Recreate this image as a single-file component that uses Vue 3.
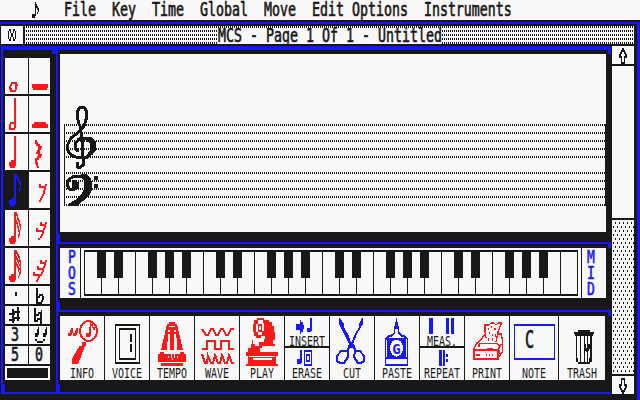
<script setup>
const menus = ['File', 'Key', 'Time', 'Global', 'Move', 'Edit Options', 'Instruments']

// Turns rows of "#" into a path made of 1x2 blocks.
function bits(x, y, rows) {
  let d = ''
  rows.forEach((row, r) => {
    for (const m of row.matchAll(/#+/g)) {
      d += `M${x + m.index} ${y + r * 2}h${m[0].length}v2h-${m[0].length}z`
    }
  })
  return d
}

const noteHead = ['..#####', '#######', '#######', '.#####.']

const palette = [
  { box: '5 58 23 36', fill: bits(9, 82, ['..######', '.##...###', '##....##', '###...##', '.######']) },
  { box: '29 58 21 36', fill: 'M32 84h16v4h-1v2h-14v-2h-1z' },
  { box: '5 96 23 36', fill: 'M14 98h2v24h-2z' + bits(9, 122, ['.######', '##...##', '##...##', '######.']) },
  { box: '29 96 21 36', fill: 'M34 122h12v2h2v4h-16v-4h2z' },
  { box: '5 134 23 36', fill: 'M14 136h2v26h-2z' + bits(9, 160, noteHead) },
  { box: '29 134 21 36', fill: bits(34, 140, ['.##', '.###', '..####', '....####', '....###', '...###', '..####', '....####', '...####', '.####', '.##', '.###', '..##', '...##']) },
  { box: '5 172 23 36', on: true, fill: 'M14 174h2v26h-2z' + bits(9, 198, noteHead) + bits(16, 174, ['#', '##', '.##', '..##', '...##', '....#', '....#', '...##', '...#']) },
  { box: '29 172 21 36', fill: bits(37, 184, ['..##....##', '..#######.', '.......##', '......##', '......##', '.....##', '....##', '...##', '..##']) },
  { box: '5 210 23 36', fill: 'M14 212h2v26h-2z' + bits(9, 236, noteHead) + bits(16, 212, ['#', '##', '.#', '.##', '#.##', '##.#', '.#.##', '.##.#', '..#.#', '..##', '...#', '..##', '..#']) },
  { box: '29 210 21 36', fill: bits(36, 222, ['....##...##', '....######.', '........##', '##.....##', '########', '......##', '.....##', '....##', '..##']) },
  { box: '5 248 23 36', fill: 'M14 250h2v26h-2z' + bits(9, 274, noteHead) + bits(16, 250, ['#', '##', '.##', '#.##', '##.#', '.####', '#.#.#', '##.##', '.##.#', '..###', '..#.#', '...##', '...#', '..#']) },
  { box: '29 248 21 36', fill: bits(33, 260, ['.......##...##', '.......######', '...........##', '....##....##', '....#######', '.........##', '##......##', '#########', '.....##', '....##', '...##']) },
  { box: '5 286 23 18', dark: true, fill: 'M15 292h2v4h-2z' },
  { box: '29 286 21 18', dark: true, fill: bits(36, 288, ['##', '##', '##', '##.####', '####..##', '##....##', '##...##', '######']) },
  { box: '5 306 23 18', dark: true, fill: bits(9, 307, ['........##', '...##...##', '...########', '######..##', '...##...##', '...########', '######..##', '...##']) },
  { box: '29 306 21 18', dark: true, fill: bits(34, 308, ['##', '##.....#', '##..####', '#####.##', '##....##', '##.#####', '####..##', '......##']) },
  { box: '5 326 23 18', text: '3' },
  { box: '29 326 21 18', dark: true, fill: bits(33, 327, ['.....#.......#', '....##......##', '....##......##', '..####....####', '..###.....###', '', '..##......##', '....######']) },
  { box: '5 346 23 18', text: '5' },
  { box: '29 346 21 18', text: '0' },
]

const staff = [124, 132, 140, 148, 156, 172, 180, 188, 196, 204]

// C to C over four octaves: every key but E, B and the last has a sharp to its right.
const keys = Array.from({ length: 29 }, (_, i) => ({
  sharp: i < 28 && ![2, 6].includes(i % 7),
}))

const upArrow = bits(0, 0, ['...##', '..####', '.##..##', '##....##', '###..###', '..#..#', '..#..#', '..####'])
const downArrow = bits(0, 0, ['..####', '..#..#', '..#..#', '###..###', '##....##', '.##..##', '..####', '...##'])
const closeBox = bits(0, 0, ['.##..##.', '#.#..#.#', '#..##..#', '#..##..#', '#.#..#.#', '.##..##.'])
const quaver = bits(0, 0, ['...#', '...##', '...###', '...#.##', '...#..#', '...#.#', '####', '###'])
</script>

<template>
  <div class="screen">
    <nav class="menu">
      <svg class="logo" viewBox="0 0 8 16"><path :d="quaver" /></svg>
      <span v-for="m in menus" :key="m" class="t8">{{ m }}</span>
    </nav>

    <header class="bar">
      <div class="close"><svg viewBox="0 0 8 12"><path :d="closeBox" /></svg></div>
      <div class="ticks"><h1 class="title"><span class="t8">MCS - Page 1 Of 1 - Untitled</span></h1></div>
    </header>

    <div class="body">
      <aside class="palette">
        <div class="cells">
          <div v-for="(c, i) in palette" :key="i" class="cell" :class="{ on: c.on, dark: c.dark }">
            <span v-if="c.text" class="t8">{{ c.text }}</span>
            <svg v-else :viewBox="c.box"><path :d="c.fill" /></svg>
          </div>
          <div class="slot"></div>
        </div>
      </aside>

      <main class="work">
        <section class="panel score">
          <svg class="sheet" viewBox="60 54 546 178">
            <path class="ink" d="M64 124h1v82h-1zM605 124h1v82h-1z" />
            <path v-for="y in staff" :key="y" class="dots" :d="`M66 ${y + 1}H605`" />
            <path class="clef" d="M82 130L79 124L77.500 118V111L80 107.500H84L86.500 111V118L84 126L79 132L71 138L67.500 145V150L71 155L76 157H87L92 153L94 148V145L90 140L85 138L79 139L75.500 143V148L78 152" />
            <path class="clef" d="M80 126L82 138L83 156V165L80 167.500H78L77.500 162" />
            <path class="ink" d="M86 137h5l5 5v8l-5 5h-4l3-5v-7l-5-3z" />
            <path class="clef" d="M83 176H74L69.500 179L67.500 182V186L70 189.500H74L77 187V183L73 182" />
            <path class="ink" d="M72 180h4l2 3v5l-3 1h-3zM81 174h5l4 3 2 5v8l-3 6-6 5-6 5h-9v-2l7-4 6-5 3-6v-8l-3-5zM94 176h4v4h-4zM94 184h4v4h-4z" />
          </svg>
        </section>

        <section class="panel piano">
          <div class="surface">
            <div class="side left"><span class="t8">P</span><span class="t8">O</span><span class="t8">S</span></div>
            <div class="keys">
              <div v-for="(k, i) in keys" :key="i" class="key"><i v-if="k.sharp"></i></div>
            </div>
            <div class="side right"><span class="t8">M</span><span class="t8">I</span><span class="t8">D</span></div>
          </div>
        </section>

        <section class="panel tools">
          <div class="toolrow">
            <div class="tool red">
              <svg viewBox="60 316 44 52">
                <ellipse cx="88.500" cy="331" rx="8.500" ry="10" class="s2" />
                <path d="M82 342h4v4h-1l-7 18h-6v-5l6-11h1v-2h3zM90 322h1v2h2v3h2v3h-2v-2h-1v-2h-1v9l-2 2h-3v-4h3zM71 328h2v4l-2 4h-3v-3h2zM76 328h2v4l-2 4h-3v-3h2z" />
              </svg>
              <span class="t6">INFO</span>
            </div>
            <div class="tool">
              <svg viewBox="105 316 44 52">
                <path fill-rule="evenodd" d="M115 324h25v40h-25zM116 326v36h23v-36zM119 328h17v32h-17zM120 330v28h15v-28zM130 334h2v8h-2zM130 344h2v8h-2z" />
              </svg>
              <span class="t6">VOICE</span>
            </div>
            <div class="tool red">
              <svg viewBox="150 316 44 52">
                <path d="M169 322h6v2h2l6 26h-22l6-26h2zM158 354h2v-2h4v2h16v-2h4v2h2v8h-3v4h-22v-4h-3z" />
                <path class="w" d="M169 326h6v1h-6zM168 330h2v2h-2zM174 330h2v2h-2zM168 334h2v16h-3v-8h1zM174 334h2l1 8v8h-3zM163 350h2v2h-2zM170 350h1v4h-1zM173 350h1v4h-1zM179 350h2v2h-2zM171 354h1v4h-1zM174 354h1v4h-1zM168 356h1v2h-1zM177 356h1v2h-1zM172 358h1v2h-1zM161 362h22v1h-22z" />
              </svg>
              <span class="t6">TEMPO</span>
            </div>
            <div class="tool red">
              <svg viewBox="195 316 44 52">
                <path class="s15" d="M202 329L206 335H208L211 329H213L216 335H218L221 329H223L226 335H228L231 329H234M202 349H207V341H215V349H221V341H229V349H234M202 354L205 363L207 363L208 356L211 363H213L215 355L218 363H220L222 355L225 363H227L229 355L232 363H234" />
              </svg>
              <span class="t6">WAVE</span>
            </div>
            <div class="tool red">
              <svg viewBox="240 316 44 52">
                <path d="M257 318h7v2h5v2h3v4h2v6h1v8h-2v4h2v2h-16v-4h5v-3h1v-3h-4v2h-5v-2h-2v-4h-1v-8h1v-4h3zM252 340h1v4h2v2h7v2h-2v4h15v2h-29v-2h2v-4h3v-4h1zM246 352h32v4h-2v8h2v2h-32v-2h2v-8h-2z" />
                <path class="w" d="M258 320h5v3h1v8h-2v4h-4v-3h-2v-8h2zM249 356h26v1h-26zM253 358h19v2h-19z" />
                <path d="M258 324h4v8h-4z" /><path class="w" d="M259 326h2v4h-2z" />
              </svg>
              <span class="t6">PLAY</span>
            </div>
            <div class="tool split blue">
              <div class="half">
                <svg viewBox="285 316 44 20"><path d="M296 324h4v-4h1v2h2v3h1v4h-1v3h-2v2h-1v-4h-4zM310 318h2v12l-2 2h-3v-4h3z" /></svg>
                <span class="t6">INSERT</span>
              </div>
              <div class="half">
                <svg viewBox="285 348 44 20"><path fill-rule="evenodd" d="M300 350h2v12l-2 2h-3v-5h3zM304 350h8v16h-8zM305 352v12h6v-12zM306 354h4v8h-4zM307 356v4h2v-4z" /></svg>
                <span class="t6">ERASE</span>
              </div>
            </div>
            <div class="tool blue">
              <svg viewBox="330 316 44 52">
                <path d="M339 318h1l4 6v3l5 9 2 6h1l2-6 5-9v-3l3-6h1v6l-6 10-4 10v4h-4v-4l-5-10-5-10z" />
                <path class="s15" d="M350 344L348 350M353 344L355 350M348 351H341L337 356V361L340 363H344L348 357ZM355 351H360L364 356V361L361 363H358L354 357Z" />
              </svg>
              <span class="t6">CUT</span>
            </div>
            <div class="tool blue">
              <svg viewBox="375 316 44 52">
                <path fill-rule="evenodd" d="M396 318h1v4h1v4h1v2h-5v-2h1v-4h1zM394 328h5v4l2 2 5 2 2 3v27h-23v-27l2-3 5-2 2-2zM395 329v4l-2 3-5 2-2 2v24h21v-24l-2-2-5-2-2-3v-4z" />
                <path d="M387 338h19v20h-19zM385 357h23v2h-23z" />
                <ellipse class="w" cx="396.500" cy="348" rx="6.500" ry="8.500" />
                <text class="g" x="396.500" y="353.500">G</text>
              </svg>
              <span class="t6">PASTE</span>
            </div>
            <div class="tool split blue">
              <div class="half">
                <svg viewBox="420 316 44 20"><path d="M429 318h4v16h-4zM446 318h3v16h-3zM451 318h3v16h-3z" /></svg>
                <span class="t6">MEAS.</span>
              </div>
              <div class="half">
                <svg viewBox="420 348 44 20"><path d="M439 350h3v16h-3zM443 350h2v16h-2zM446 354h2v3h-2zM446 359h2v3h-2z" /></svg>
                <span class="t6">REPEAT</span>
              </div>
            </div>
            <div class="tool red">
              <svg viewBox="465 316 44 52">
                <path class="s1" d="M486 338L485 332V325H489L491 323H494L496 325L498 323H501.500L498 332L496 342M480 341L485 334M498 334H501L502.500 340V352L498 358M473.500 349L477 343L480 341M479 343.500H497L500 346M474 350H498M498 350L501 344" />
                <path class="s15" d="M474 349V359H498V350M474 350H498" />
                <path d="M476 354h4v2h-4zM486 354h1v2h-1zM489 354h1v2h-1zM492 354h1v2h-1zM487 348h6v2h-6zM488 328h1v2h-1zM491 326h1v2h-1zM494 328h2v2h-2zM489 332h1v2h-1zM492 334h1v2h-1zM495 334h1v3h-1zM488 338h1v3h-1zM492 338h1v3h-1zM478 344h2v3h-2zM499 350h1v4h-1z" />
              </svg>
              <span class="t6">PRINT</span>
            </div>
            <div class="tool note"><div class="frame"><span class="t8 big">C</span></div><span class="t6">NOTE</span></div>
            <div class="tool last">
              <svg viewBox="559 316 46 52">
                <path d="M578 330h12v2h4v2h-1v2h-1v26h-2v2h-12v-2h-2v-26h-1v-2h-1v-2h4z" />
                <path class="w" d="M577 336h3v24h-1v-2h-2zM581 336h3v26h-3zM585 336h2v26h-2zM588 336h2v22h-1v4h-1zM578 358h2v4h-2z" />
                <path d="M584 344h2v4h2v-4h2v4l-2 4h-2l-2-4z" />
              </svg>
              <span class="t6">TRASH</span>
            </div>
          </div>
        </section>
      </main>

      <aside class="scroll">
        <div class="arrow"><svg viewBox="0 0 8 16"><path :d="upArrow" /></svg></div>
        <div class="thumb"></div>
        <div class="track"></div>
        <div class="arrow"><svg viewBox="0 0 8 16"><path :d="downArrow" /></svg></div>
      </aside>
    </div>
  </div>
</template>

<style>
body { background: #181818; }
</style>

<style scoped>
* { box-sizing: border-box; }
.screen {
  --k: #181818; --w: #f8f8f8; --b: #1818ff; --r: #ff1818;
  width: 640px; height: 400px; overflow: hidden;
  background: var(--k); color: var(--k);
  font-family: "DejaVu Sans Mono", monospace;
}
svg { display: block; fill: currentColor; shape-rendering: crispEdges; flex: none; }
.t8, .t6 { display: block; white-space: pre; transform-origin: 0 0; }
.t8 { font-size: 13.29px; line-height: 11px; height: 11px; transform: scaleY(1.4); -webkit-text-stroke: 0.45px currentColor; }
.t6 { font-size: 9.97px; line-height: 8px; height: 8px; transform: scaleY(1.38); }

.menu { height: 20px; display: flex; gap: 16px; padding: 2px 0 0 32px; background: var(--w); }
.logo { width: 8px; height: 16px; margin: 0 8px 0 0; }

.bar {
  height: 26px; width: 640px; display: flex; padding: 4px 6px 2px 1px; border-top: 2px solid var(--k);
  background: linear-gradient(var(--b), var(--b)) 0 0 / 640px 2px no-repeat, linear-gradient(var(--b), var(--b)) 637px 0 / 3px 26px no-repeat, var(--k);
}
.close { width: 22px; background: var(--w); display: flex; align-items: center; justify-content: center; margin-right: 2px; }
.close svg { width: 8px; height: 12px; }
.ticks {
  flex: 1; display: flex; padding-top: 2px;
  background: repeating-linear-gradient(transparent 0 2px, var(--w) 2px 4px), repeating-linear-gradient(90deg, var(--w) 0 1px, var(--k) 1px 2px);
}
.title { margin: 0 0 0 192px; width: 225px; padding-left: 1px; height: 16px; background: var(--w); font-weight: normal; }

.body { height: 354px; display: flex; border-right: 3px solid var(--b); padding-left: 1px; }
.palette { width: 55px; height: 348px; border: solid var(--b); border-width: 4px 0 2px 2px; position: relative; }
.palette::before, .palette::after, .panel::before, .panel::after { content: ""; position: absolute; background: var(--b); }
.palette::before { right: 0; top: 0; width: 4px; height: 4px; }
.palette::after { left: 0; bottom: 0; width: 2px; height: 8px; }
.cells { margin: 8px 0 0 2px; width: 45px; display: grid; grid-template-columns: 23px 21px; grid-template-rows: repeat(6, 36px) repeat(4, 18px) 14px; gap: 2px 1px; }
.cell { background: var(--w); color: var(--r); }
.cell svg { width: 100%; height: 100%; }
.cell.on { background: var(--k); color: var(--b); }
.cell.dark { color: var(--k); }
.cell .t8 { color: var(--k); margin: 1px 0 0 6px; width: 9px; }
.slot { grid-column: 1 / 3; background: var(--k); border: 2px solid var(--w); }

.work { width: 555px; height: 348px; border-bottom: 2px solid var(--b); }
.panel { position: relative; border: solid var(--b); border-width: 2px 0 0 2px; padding: 4px 5px 0 2px; height: 68px; }
.panel::before { right: 0; top: -2px; width: 3px; height: 6px; }
.panel::after { left: 0; bottom: 0; width: 2px; height: 8px; }
.score { height: 196px; border-top-width: 4px; }
.score::before { top: -4px; height: 8px; }
.tools { height: 82px; }
.sheet { width: 546px; height: 178px; background: var(--w); }
.ink { fill: var(--k); }
.clef { fill: none; stroke: var(--k); stroke-width: 3; }
.dots { stroke: var(--k); stroke-width: 2; stroke-dasharray: 1 1; }

.surface { height: 50px; background: var(--w); display: flex; color: var(--b); }
.side { padding-top: 1px; display: flex; flex-direction: column; gap: 5px; }
.left { width: 21px; padding-left: 8px; border-right: 1px solid var(--k); margin-right: 3px; }
.right { margin-left: 3px; border-left: 1px solid var(--k); padding-left: 5px; }
.side .t8 { width: 9px; font-size: 13px; line-height: 11px; }
.keys { width: 494px; margin-top: 2px; height: 46px; border: solid var(--k); border-width: 2px 0 2px 1px; display: flex; }
.key { width: 17px; border-right: 1px solid var(--k); position: relative; }
.key i { position: absolute; z-index: 1; right: -5px; top: 0; width: 9px; height: 26px; background: var(--k); }

.toolrow { height: 64px; width: 545px; background: var(--w); display: flex; }
.tool { width: 45px; border-right: 1px solid var(--k); display: flex; flex-direction: column; align-items: center; }
.tool svg { width: 44px; height: 52px; }
.tool .t6 { color: var(--k); }
.red { color: var(--r); }
.blue { color: var(--b); }
.note { width: 49px; }
.last { width: 46px; border-right: 0; }
.last svg { width: 46px; }
.half { height: 32px; display: flex; flex-direction: column; align-items: center; width: 44px; }
.half:first-child { border-bottom: 2px solid var(--k); }
.half svg { height: 20px; }
.w { fill: var(--w); }
.s1, .s15, .s2 { fill: none; stroke: currentColor; stroke-width: 1.4; }
.s15, .s2 { stroke-width: 2; }
.g { font-size: 14px; font-weight: bold; text-anchor: middle; }
.frame { width: 41px; height: 36px; margin: 8px 3px 8px 0; border: solid var(--b); border-width: 2px 1px; padding: 6px 0 0 10px; align-self: flex-end; }
.frame .big { color: var(--k); font-size: 15px; transform: scaleY(1.6); width: 10px; }

.scroll { width: 22px; height: 348px; margin-left: 1px; display: flex; flex-direction: column; gap: 2px; }
.arrow, .thumb { background: var(--w); }
.arrow { height: 18px; display: flex; align-items: flex-end; justify-content: center; }
.arrow svg { width: 8px; height: 16px; }
.thumb { height: 152px; }
.track {
  height: 154px;
  background:
    conic-gradient(at 1px 2px, transparent 75%, var(--k) 0) 3px 2px / 4px 8px,
    conic-gradient(at 1px 2px, transparent 75%, var(--k) 0) 1px 6px / 4px 8px,
    var(--w);
}
</style>
